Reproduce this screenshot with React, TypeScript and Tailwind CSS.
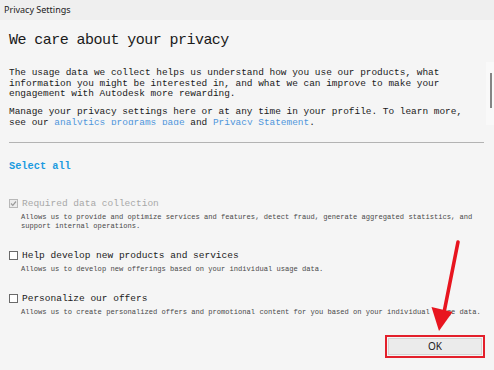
import React from "react";

const mono = { fontFamily: '"Liberation Mono", "DejaVu Sans Mono", monospace' };

function Check({ checked, disabled }: { checked?: boolean; disabled?: boolean }) {
  return (
    <div
      className={
        "w-[9px] h-[9px] shrink-0 border flex items-center justify-center " +
        (disabled ? "border-[#b8b8b8] bg-[#ececec]" : "border-[#6a6a6a] bg-white")
      }
    >
      {checked && (
        <svg width="7" height="7" viewBox="0 0 7 7">
          <path d="M1 3.5 L2.8 5.3 L6 1.5" fill="none" stroke="#9a9a9a" strokeWidth="1.2" />
        </svg>
      )}
    </div>
  );
}

function Option({
  label,
  desc,
  checked,
  disabled,
  mt,
}: {
  label: string;
  desc: string[];
  checked?: boolean;
  disabled?: boolean;
  mt: string;
}) {
  return (
    <div className={mt}>
      <div className="flex items-center gap-[4px] h-[11px]">
        <Check checked={checked} disabled={disabled} />
        <div
          className={"text-[9.5px] leading-[11px] whitespace-pre " + (disabled ? "text-[#a8a8a8]" : "text-[#1a1a1a]")}
          style={mono}
        >
          {label}
        </div>
      </div>
      <div className="mt-[4px] pl-[12px] text-[7.1px] leading-[8.5px] text-[#4a4a4a]" style={mono}>
        {desc.map((d, i) => (
          <div key={i} className="whitespace-pre">
            {d}
          </div>
        ))}
      </div>
    </div>
  );
}

export default function App() {
  return (
    <div className="w-[494px] h-[370px] bg-[#f5f5f5] relative overflow-hidden flex flex-col">
      {/* title bar */}
      <div className="h-[20px] bg-[#efefef] flex items-center pl-[4px] shrink-0">
        <span className="text-[9px] text-[#222]" style={{ fontFamily: '"Noto Sans", "Open Sans", sans-serif' }}>
          Privacy Settings
        </span>
      </div>

      {/* scroll area */}
      <div className="h-[105px] relative overflow-hidden pl-[9px] shrink-0">
        <div className="mt-[12px] text-[15px] leading-[17px] tracking-[-0.55px] text-[#1a1a1a] whitespace-pre" style={mono}>
          We care about your privacy
        </div>
        <div className="mt-[19px] text-[9.45px] leading-[10.5px] text-[#1a1a1a]" style={mono}>
          <div className="whitespace-pre">The usage data we collect helps us understand how you use our products, what</div>
          <div className="whitespace-pre">information you might be interested in, and what we can improve to make your</div>
          <div className="whitespace-pre">engagement with Autodesk more rewarding.</div>
        </div>
        <div className="mt-[7.5px] text-[9.45px] leading-[10.5px] text-[#1a1a1a]" style={mono}>
          <div className="whitespace-pre">Manage your privacy settings here or at any time in your profile. To learn more,</div>
          <div className="whitespace-pre">
            see our <span className="text-[#4f96dc]">analytics programs page</span> and{" "}
            <span className="text-[#4f96dc]">Privacy Statement</span>.
          </div>
        </div>
        {/* scrollbar */}
        <div className="absolute right-0 top-[42px] w-[8px] h-[63px] bg-[#f9f9f9]">
          <div className="absolute left-[4px] top-[11px] w-[1.5px] h-[35px] bg-[#858585]" />
        </div>
      </div>

      {/* divider */}
      <div className="mt-[17px] ml-[9px] mr-[10px] h-px bg-[#b3b3b3] shrink-0" />

      <div className="pl-[9px]">
        <div className="mt-[17px] text-[10.3px] leading-[12px] font-bold text-[#1c9be0] whitespace-pre" style={mono}>
          Select all
        </div>

        <Option
          mt="mt-[26px]"
          checked
          disabled
          label="Required data collection"
          desc={[
            "Allows us to provide and optimize services and features, detect fraud, generate aggregated statistics, and",
            "support internal operations.",
          ]}
        />
        <Option
          mt="mt-[20px]"
          label="Help develop new products and services"
          desc={["Allows us to develop new offerings based on your individual usage data."]}
        />
        <Option
          mt="mt-[19.5px]"
          label="Personalize our offers"
          desc={["Allows us to create personalized offers and promotional content for you based on your individual usage data."]}
        />
      </div>

      {/* OK button */}
      <div className="flex justify-end pr-[9px] mt-[18px]">
        <div className="w-[100px] h-[23px] border-2 border-[#e3202b] p-[1px]">
          <div className="w-full h-full bg-[#ebebeb] border border-[#d4d4d4] flex items-center justify-center">
            <span className="text-[10px] text-[#1a1a1a]" style={{ fontFamily: '"Noto Sans", "Open Sans", sans-serif' }}>
              OK
            </span>
          </div>
        </div>
      </div>

      {/* annotation arrow */}
      <svg className="absolute left-0 top-0 pointer-events-none" width="494" height="370" viewBox="0 0 494 370">
        <line x1="458" y1="242" x2="444.5" y2="310" stroke="#e8151f" strokeWidth="3.6" strokeLinecap="round" />
        <polygon points="431.5,307 452.5,312 439,331" fill="#e8151f" />
      </svg>
    </div>
  );
}
